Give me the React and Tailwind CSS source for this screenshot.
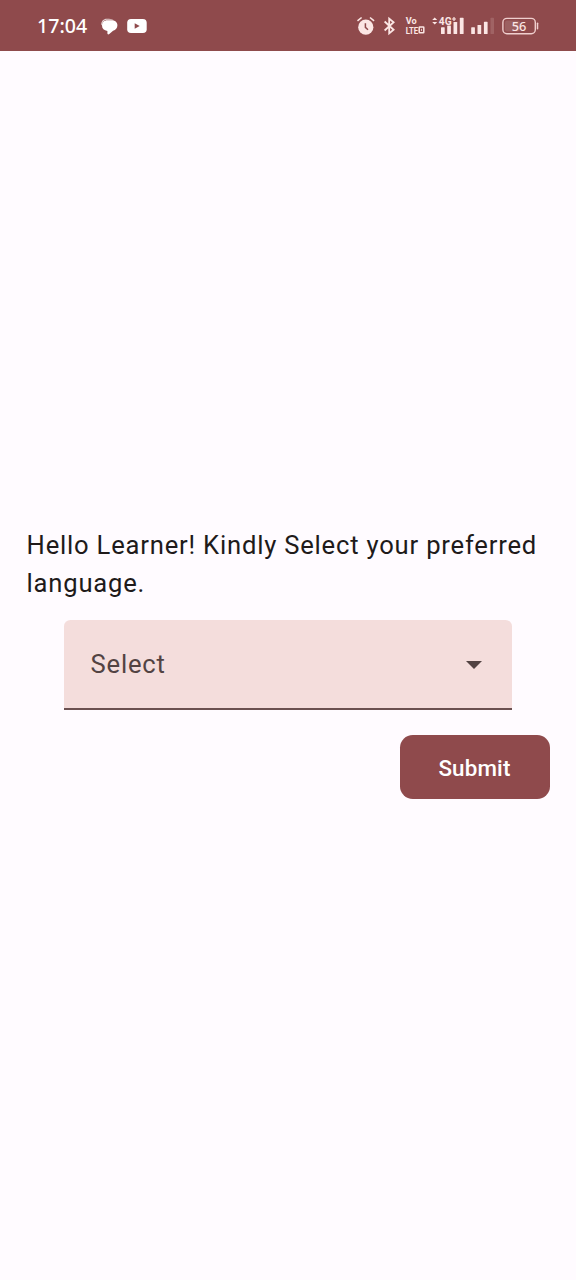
import React from "react";

function ChatIcon() {
  return (
    <svg className="ml-[13px] h-[18px] w-[18px] shrink-0" viewBox="0 0 18 18" fill="#fff">
      <path d="M1.200 7.500C1.300 4 3.500 1.700 6.800 1.700c2.900 0 5.200.1 6.600 1.100H7.600C4.500 2.800 2.600 4.400 2.100 8.600z" opacity=".75" />
      <path d="M7.300 3.200h4.600c3.300 0 5.500 2.200 5.500 5.100 0 2.800-1.700 4.800-4.300 5.400L9.300 16.900c-.9.900-1.900.5-1.900-.7v-2.300C4.100 13.500 2 11.700 2 8.500c0-3.100 2.200-5.300 5.300-5.300z" />
    </svg>
  );
}

function VideoIcon() {
  return (
    <svg className="ml-[9px] h-[16px] w-[20px] shrink-0" viewBox="0 0 20 16">
      <rect x=".2" y="1" width="19.500" height="14" rx="3.800" fill="#fff" />
      <path d="M7.700 5.300v5.400l5-2.700z" fill="#8f4a4c" />
    </svg>
  );
}

function AlarmIcon() {
  return (
    <svg className="h-[20px] w-[20px] shrink-0" viewBox="0 0 20 20">
      <circle cx="9.800" cy="11.200" r="7.600" fill="#fbe6e4" />
      <path d="M1.500 4.800 5.600 1.500M14 1.500l4.100 3.300" stroke="#fbe6e4" strokeWidth="1.600" fill="none" />
      <path d="M9.400 7.200v4.200l2.600 2.400" stroke="#8f4a4c" strokeWidth="1.500" fill="none" />
    </svg>
  );
}

function BluetoothIcon() {
  return (
    <svg className="ml-[8px] h-[20px] w-[13px] shrink-0" viewBox="0 0 13 20">
      <path d="M.6 5.500 9.600 13.800l-4.400 3.600V2.600l4.400 3.600L.6 14.500" stroke="#fbe6e4" strokeWidth="1.800" fill="none" />
    </svg>
  );
}

function VolteIcon() {
  return (
    <svg className="ml-[8px] h-[20px] w-[20px] shrink-0" viewBox="0 0 20 20" fill="#fbe6e4">
      <text x=".7" y="8.300" fontFamily="Roboto, sans-serif" fontSize="9" fontWeight="700" textLength="11" lengthAdjust="spacingAndGlyphs">Vo</text>
      <text x=".7" y="17.500" fontFamily="Roboto, sans-serif" fontSize="9.500" fontWeight="700" textLength="12.500" lengthAdjust="spacingAndGlyphs">LTE</text>
      <rect x="14.200" y="11" width="4.600" height="5.800" rx=".5" fill="none" stroke="#fbe6e4" strokeWidth="1.500" />
      <path d="M16.500 12.800v2.200" stroke="#fbe6e4" strokeWidth=".8" />
    </svg>
  );
}

function MobileSignalIcon() {
  return (
    <svg className="ml-[7px] h-[20px] w-[33px] shrink-0" viewBox="0 0 33 20" fill="#fbe6e4">
      <path d="M.2 4 2.700 1.500 5.200 4zM.2 5.900l2.500 2.500 2.500-2.500z" />
      <text x="6.800" y="8.600" fontFamily="Roboto, sans-serif" fontSize="10.500" fontWeight="700" textLength="12.800" lengthAdjust="spacingAndGlyphs">4G</text>
      <path d="M20 3h4M22 1v4" stroke="#fbe6e4" strokeWidth="1.200" />
      <rect x="9" y="11.200" width="3.700" height="6.800" rx=".6" />
      <rect x="15.200" y="9.500" width="3.700" height="8.500" rx=".6" />
      <rect x="21.500" y="6" width="3.700" height="12" rx=".6" />
      <rect x="27.800" y="1.800" width="3.800" height="16.200" rx=".6" />
    </svg>
  );
}

function SignalIcon() {
  return (
    <svg className="ml-[6px] h-[20px] w-[24px] shrink-0" viewBox="0 0 24 20" fill="#fbe6e4">
      <rect x=".2" y="11.200" width="3.700" height="6.800" rx=".6" />
      <rect x="6.500" y="9" width="3.700" height="9" rx=".6" />
      <rect x="12.900" y="5.800" width="3.700" height="12.200" rx=".6" />
      <rect x="19.500" y="1.800" width="3.500" height="16.200" rx=".6" opacity=".16" />
    </svg>
  );
}

function BatteryIcon() {
  return (
    <svg className="ml-[7px] h-[20px] w-[38px] shrink-0" viewBox="0 0 38 20">
      <rect x=".9" y="2.400" width="32.400" height="15.300" rx="4" fill="none" stroke="#f0cfce" strokeWidth="1.400" />
      <rect x="3" y="4.500" width="15" height="11" rx="2" fill="#fff" opacity=".12" />
      <path d="M35.500 7.200v5.600" stroke="#f0cfce" strokeWidth="1.500" strokeLinecap="round" />
      <text x="17.100" y="14.600" textAnchor="middle" fontFamily="'Noto Sans', sans-serif" fontSize="12.800" fontWeight="500" fill="#fbe6e4">56</text>
    </svg>
  );
}

function StatusBar() {
  return (
    <header className="flex h-[51px] shrink-0 items-center bg-[#8f4a4c] pt-px pr-[36px] pl-[37px]">
      <span className="w-[50px] font-['Noto_Sans',sans-serif] text-[19.6px] leading-6 font-medium whitespace-nowrap text-white">17:04</span>
      <ChatIcon />
      <VideoIcon />
      <div className="ml-auto flex items-center">
        <AlarmIcon />
        <BluetoothIcon />
        <VolteIcon />
        <MobileSignalIcon />
        <SignalIcon />
        <BatteryIcon />
      </div>
    </header>
  );
}

export default function App() {
  return (
    <div className="flex h-[1280px] w-[576px] flex-col bg-[#fffbff] font-['Roboto',sans-serif]">
      <StatusBar />
      <main className="flex flex-1 flex-col pt-[475px] pr-[26px] pl-[26px]">
        <p className="pl-[0.6px] text-[25.6px] leading-[38.4px] tracking-[0.8px] text-[#201a1a]">
          Hello Learner! Kindly Select your preferred language.
        </p>
        <button
          type="button"
          className="mt-[17px] flex h-[90px] w-[448px] items-center justify-between self-center rounded-t-[6.4px] border-b-2 border-[#6b5050] bg-[#f4dddc] pr-[30px] pl-[26.6px] text-[25.6px] tracking-[0.8px] text-[#524343]"
        >
          <span>Select</span>
          <svg className="mt-[2px] h-[8px] w-[16px]" viewBox="0 0 16 8" fill="#524343">
            <path d="M0 0h16L8 8z" />
          </svg>
        </button>
        <button
          type="button"
          className="mt-[25px] h-16 w-[150px] self-end rounded-[12.8px] bg-[#8f4a4c] pt-[3px] pr-px text-[22.4px] font-medium tracking-[0.16px] text-white"
        >
          Submit
        </button>
      </main>
    </div>
  );
}
